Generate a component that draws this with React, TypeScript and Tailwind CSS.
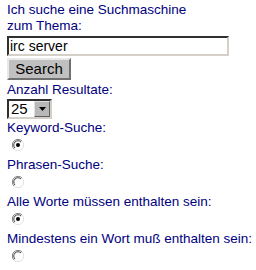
import React from 'react';

function Radio({ checked }: { checked?: boolean }) {
  return (
    <svg width="12" height="12" viewBox="0 0 12 12" className="block">
      <circle cx="6" cy="6" r="5.5" fill="#ffffff" />
      <path d="M10 2 A5.5 5.5 0 0 0 2 10" fill="none" stroke="#808080" strokeWidth="1" />
      <path d="M9 3 A4 4 0 0 0 3 9" fill="none" stroke="#404040" strokeWidth="1" />
      <path d="M2 10 A5.5 5.5 0 0 0 10 2" fill="none" stroke="#e0e0e0" strokeWidth="1" />
      {checked && <circle cx="6" cy="6" r="2" fill="#000000" />}
    </svg>
  );
}

function Field({ label, checked }: { label: string; checked?: boolean }) {
  return (
    <div>
      <div className="h-[16px]">{label}</div>
      <div className="h-[21px] pl-[5px] pt-[3px]">
        <Radio checked={checked} />
      </div>
    </div>
  );
}

export default function App() {
  return (
    <div
      className="w-[256px] h-[270px] bg-white px-[7px] pt-[2px] text-[13.5px] leading-[16px] text-[#000080] overflow-hidden whitespace-nowrap"
      style={{ fontFamily: '"Liberation Sans", Arial, sans-serif' }}
    >
      <div>Ich suche eine Suchmaschine</div>
      <div>zum Thema:</div>
      <div className="mt-[2px] w-[222px] h-[20px] border-2 border-t-[#303030] border-l-[#303030] border-r-[#d4d0c8] border-b-[#d4d0c8] bg-white px-[1px] text-[14px] leading-[16px] text-black">
        irc server
      </div>
      <div className="mt-[2px] w-[64px] h-[22px] border-2 border-t-[#e8e8e8] border-l-[#e8e8e8] border-r-[#707070] border-b-[#707070] bg-[#c0c0c0] flex items-center justify-center text-[15px] text-black">
        Search
      </div>
      <div className="mt-[2px] h-[16px]">Anzahl Resultate:</div>
      <div className="mt-[1px] flex w-[45px] h-[20px] border-2 border-t-[#303030] border-l-[#303030] border-r-[#d4d0c8] border-b-[#d4d0c8] bg-white">
        <div className="flex-1 pl-[2px] text-[15px] leading-[16px] text-black">25</div>
        <div className="w-[16px] h-full bg-[#b8b8b8] border border-t-[#e0e0e0] border-l-[#e0e0e0] border-r-[#606060] border-b-[#606060] flex items-center justify-center">
          <svg width="7" height="4" viewBox="0 0 7 4">
            <path d="M0 0 H7 L3.5 4 Z" fill="#000" />
          </svg>
        </div>
      </div>
      <div className="mt-[1px]">
        <Field label="Keyword-Suche:" checked />
        <Field label="Phrasen-Suche:" />
        <Field label="Alle Worte müssen enthalten sein:" checked />
        <Field label="Mindestens ein Wort muß enthalten sein:" />
      </div>
    </div>
  );
}
